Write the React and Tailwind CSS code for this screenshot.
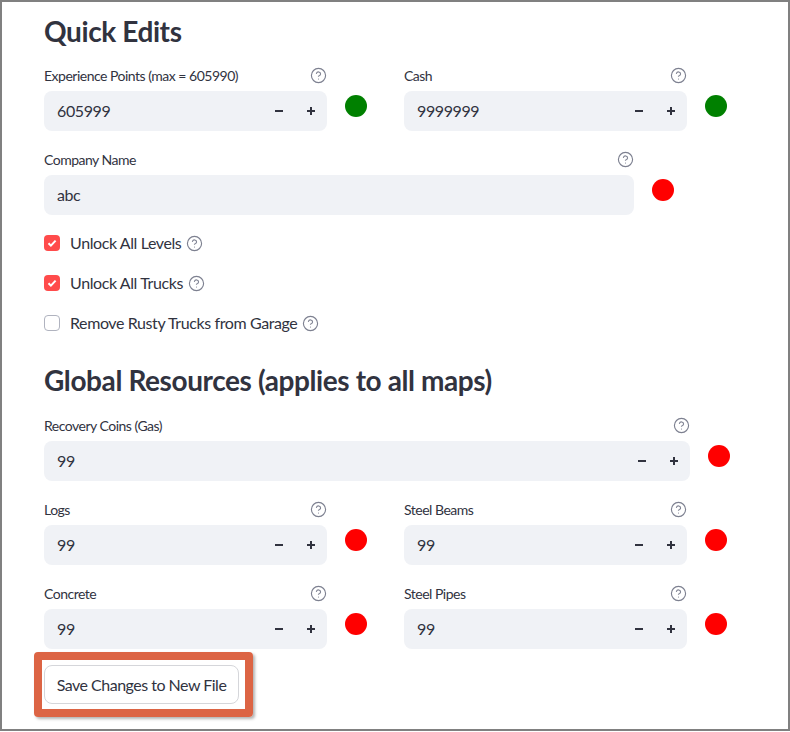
import React from "react";
import { CircleHelp } from "lucide-react";

const font = { fontFamily: '"Source Sans Pro", Lato, "Noto Sans", sans-serif' };

function Help() {
  return <CircleHelp size={17} strokeWidth={1.6} className="text-[#7d8090] shrink-0" />;
}

function Dot({ ok }) {
  return (
    <div
      className={
        "w-[22px] h-[22px] rounded-full mt-[30px] shrink-0 " +
        (ok ? "bg-[#008000]" : "bg-[#ff0000]")
      }
    />
  );
}

function Stepper() {
  return (
    <div className="flex h-full">
      <button className="w-8 h-full flex items-center justify-center">
        <svg width="10" height="10" viewBox="0 0 10 10">
          <path d="M1 5h8" stroke="#31333f" strokeWidth="2" />
        </svg>
      </button>
      <button className="w-8 h-full flex items-center justify-center">
        <svg width="10" height="10" viewBox="0 0 10 10">
          <path d="M1 5h8M5 1v8" stroke="#31333f" strokeWidth="2" />
        </svg>
      </button>
    </div>
  );
}

function Field({ label, value, width, number = true, ok }) {
  return (
    <div className="flex gap-[18px]">
      <div className={width}>
        <div className="h-5 flex items-center justify-between mb-[6px]">
          <span className="text-[14px] tracking-[-0.5px] text-[#31333f]">{label}</span>
          <Help />
        </div>
        <div className="h-10 bg-[#f0f2f6] rounded-lg flex items-center justify-between pl-[13px]">
          <span className="text-[16px] tracking-[-0.4px] text-[#31333f]">{value}</span>
          {number && <Stepper />}
        </div>
      </div>
      <Dot ok={ok} />
    </div>
  );
}

function Check({ label, checked }) {
  return (
    <div className="h-10 flex items-center">
      {checked ? (
        <div className="w-4 h-4 rounded-[4px] bg-[#ff4b4b] flex items-center justify-center">
          <svg width="12" height="12" viewBox="0 0 12 12">
            <path d="M2.5 6.2l2.4 2.4L9.6 3.6" stroke="#fff" strokeWidth="2" fill="none" />
          </svg>
        </div>
      ) : (
        <div className="w-4 h-4 rounded-[4px] border border-[#b0b3bf] bg-white" />
      )}
      <span className="ml-[10px] mr-[5px] text-[16px] tracking-[-0.4px] text-[#31333f]">{label}</span>
      <Help />
    </div>
  );
}

export default function App() {
  return (
    <div
      style={font}
      className="w-[790px] h-[731px] border-2 border-[#808080] bg-white pl-[42px] pt-[12px] overflow-hidden"
    >
      <h3 className="text-[28px] leading-[34px] font-bold tracking-[-0.4px] text-[#31333f]">Quick Edits</h3>

      <div className="flex gap-[37px] mt-[17px]">
        <Field label="Experience Points (max = 605990)" value="605999" width="w-[283px]" ok />
        <Field label="Cash" value="9999999" width="w-[283px]" ok />
      </div>

      <div className="mt-[18px]">
        <Field label="Company Name" value="abc" width="w-[590px]" number={false} />
      </div>

      <div className="mt-2">
        <Check label="Unlock All Levels" checked />
        <Check label="Unlock All Trucks" checked />
        <Check label="Remove Rusty Trucks from Garage" />
      </div>

      <h3 className="mt-5 text-[28px] leading-[34px] font-bold tracking-[-0.4px] text-[#31333f]">
        Global Resources (applies to all maps)
      </h3>

      <div className="mt-[18px]">
        <Field label="Recovery Coins (Gas)" value="99" width="w-[646px]" />
      </div>

      <div className="flex gap-[37px] mt-[18px]">
        <Field label="Logs" value="99" width="w-[283px]" />
        <Field label="Steel Beams" value="99" width="w-[283px]" />
      </div>

      <div className="flex gap-[37px] mt-[18px]">
        <Field label="Concrete" value="99" width="w-[283px]" />
        <Field label="Steel Pipes" value="99" width="w-[283px]" />
      </div>

      <div className="mt-[3px] -ml-[10px] w-[219px] h-[65px] border-8 border-[#dc6444] rounded-[4px] pl-[2px] pt-[5px] shadow-[2px_2px_3px_rgba(0,0,0,0.3)]">
        <button className="w-[195px] h-[39px] border border-[#d5d6da] rounded-lg bg-white text-[16px] tracking-[-0.5px] text-[#31333f]">
          Save Changes to New File
        </button>
      </div>
    </div>
  );
}
